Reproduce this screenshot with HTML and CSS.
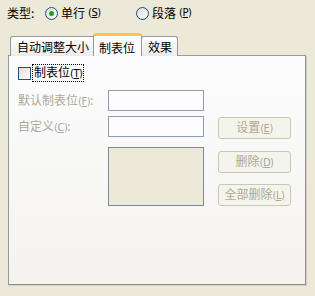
FILE: index.html
```html
<!DOCTYPE html>
<html lang="zh-CN">
  <head>
    <meta charset="UTF-8" />
    <title>制表位</title>
    <link rel="stylesheet" href="styles.css">
  </head>
  <body>
    <div class="tipo">
      <span class="tipo-label">类型:</span>
      <label class="radio checked"><span class="radio-dot"></span>单行<span class="ak">(<u>S</u>)</span></label>
      <label class="radio"><span class="radio-dot"></span>段落<span class="ak">(<u>P</u>)</span></label>
    </div>

    <div class="abas">
      <div class="aba">自动调整大小</div>
      <div class="aba ativa">制表位</div>
      <div class="aba">效果</div>
    </div>

    <div class="painel">
      <div class="check-linha">
        <span class="check"></span>
        <span class="foco">制表位<span class="ak">(<u>T</u>)</span></span>
      </div>

      <div class="grade">
        <span class="rotulo">默认制表位<span class="ak">(<u>F</u>)</span>:</span>
        <div class="campo"></div>
        <div></div>

        <span class="rotulo">自定义<span class="ak">(<u>C</u>)</span>:</span>
        <div class="campo"></div>
        <button class="botao" disabled>设置<span class="ak">(<u>E</u>)</span></button>

        <div></div>
        <div class="lista"></div>
        <div class="botoes">
          <button class="botao" disabled>删除<span class="ak">(<u>D</u>)</span></button>
          <button class="botao" disabled>全部删除<span class="ak">(<u>L</u>)</span></button>
        </div>
      </div>
    </div>
  </body>
</html>
```

FILE: styles.css
```css
* {
  margin: 0;
  padding: 0;
  box-sizing: border-box;
}

body {
  background-color: #ece9d8;
  font-family: "Noto Sans CJK SC", "Noto Sans", sans-serif;
  font-size: 12px;
  line-height: 14px;
  color: #000;
  width: 315px;
  height: 296px;
  overflow: hidden;
}

.ak {
  font-family: "DejaVu Sans", sans-serif;
  font-size: 10px;
  letter-spacing: -0.5px;
}

/* linha do tipo */
.tipo {
  display: flex;
  align-items: center;
  height: 27px;
  padding: 0 0 1px 7px;
}

.tipo-label {
  width: 38px;
}

.radio {
  display: flex;
  align-items: center;
  gap: 3px;
  width: 91px;
}

.radio-dot {
  width: 13px;
  height: 13px;
  border: 1px solid #1c5180;
  border-radius: 50%;
  background: linear-gradient(135deg, #dcdcd7, #ffffff);
  display: flex;
  align-items: center;
  justify-content: center;
}

.radio.checked .radio-dot::after {
  content: "";
  width: 5px;
  height: 5px;
  border-radius: 50%;
  background: #21a121;
}

/* abas */
.abas {
  display: flex;
  align-items: flex-end;
  height: 28px;
  padding-left: 10px;
}

.aba {
  height: 20px;
  padding: 3px 5px 0 6px;
  border: 1px solid #919b9c;
  border-bottom: none;
  border-radius: 3px 3px 0 0;
  background: linear-gradient(#ffffff, #ecebe6);
  margin-bottom: -1px;
}

.aba.ativa {
  height: 23px;
  padding: 5px 6px 0 5px;
  margin: 0 -1px -1px;
  background: #fcfcfe;
  border-top: 3px solid #ffc83c;
  position: relative;
  z-index: 1;
}

.aba + .aba.ativa {
  margin-left: -2px;
}

/* painel */
.painel {
  margin: 0 9px 0 8px;
  height: 230px;
  border: 1px solid #919b9c;
  border-right-color: #8a9293;
  border-bottom-color: #8a9293;
  box-shadow: 1px 1px 0 #d0cec2;
  background: linear-gradient(#fcfcfe, #f4f3ee);
  padding: 10px 0 0 9px;
}

.check-linha {
  display: flex;
  align-items: center;
  gap: 2px;
  height: 14px;
}

.check {
  width: 13px;
  height: 13px;
  border: 1px solid #1c5180;
  background: linear-gradient(135deg, #dcdcd7, #ffffff);
}

.foco {
  outline: 1px dotted #000;
  padding: 0 1px;
}

.grade {
  display: grid;
  grid-template-columns: 76px 96px 73px;
  column-gap: 14px;
  row-gap: 5px;
  margin-top: 10px;
}

.rotulo {
  color: #aca899;
  padding-top: 3px;
  white-space: nowrap;
}

.campo {
  height: 21px;
  border: 1px solid #8e9eb1;
  background: #fdfdff;
}

.lista {
  height: 59px;
  margin-top: 3px;
  border: 1px solid #7f8a99;
  background: #ece9d8;
}

.botoes {
  display: flex;
  flex-direction: column;
  gap: 11px;
  padding-top: 7px;
}

.botao {
  height: 22px;
  margin-top: 1px;
  border: 1px solid #c9c7ba;
  border-radius: 3px;
  background: #f5f4ea;
  color: #aca899;
  font-family: inherit;
  font-size: 12px;
  line-height: 14px;
}

.botoes .botao {
  margin-top: 0;
}
```
